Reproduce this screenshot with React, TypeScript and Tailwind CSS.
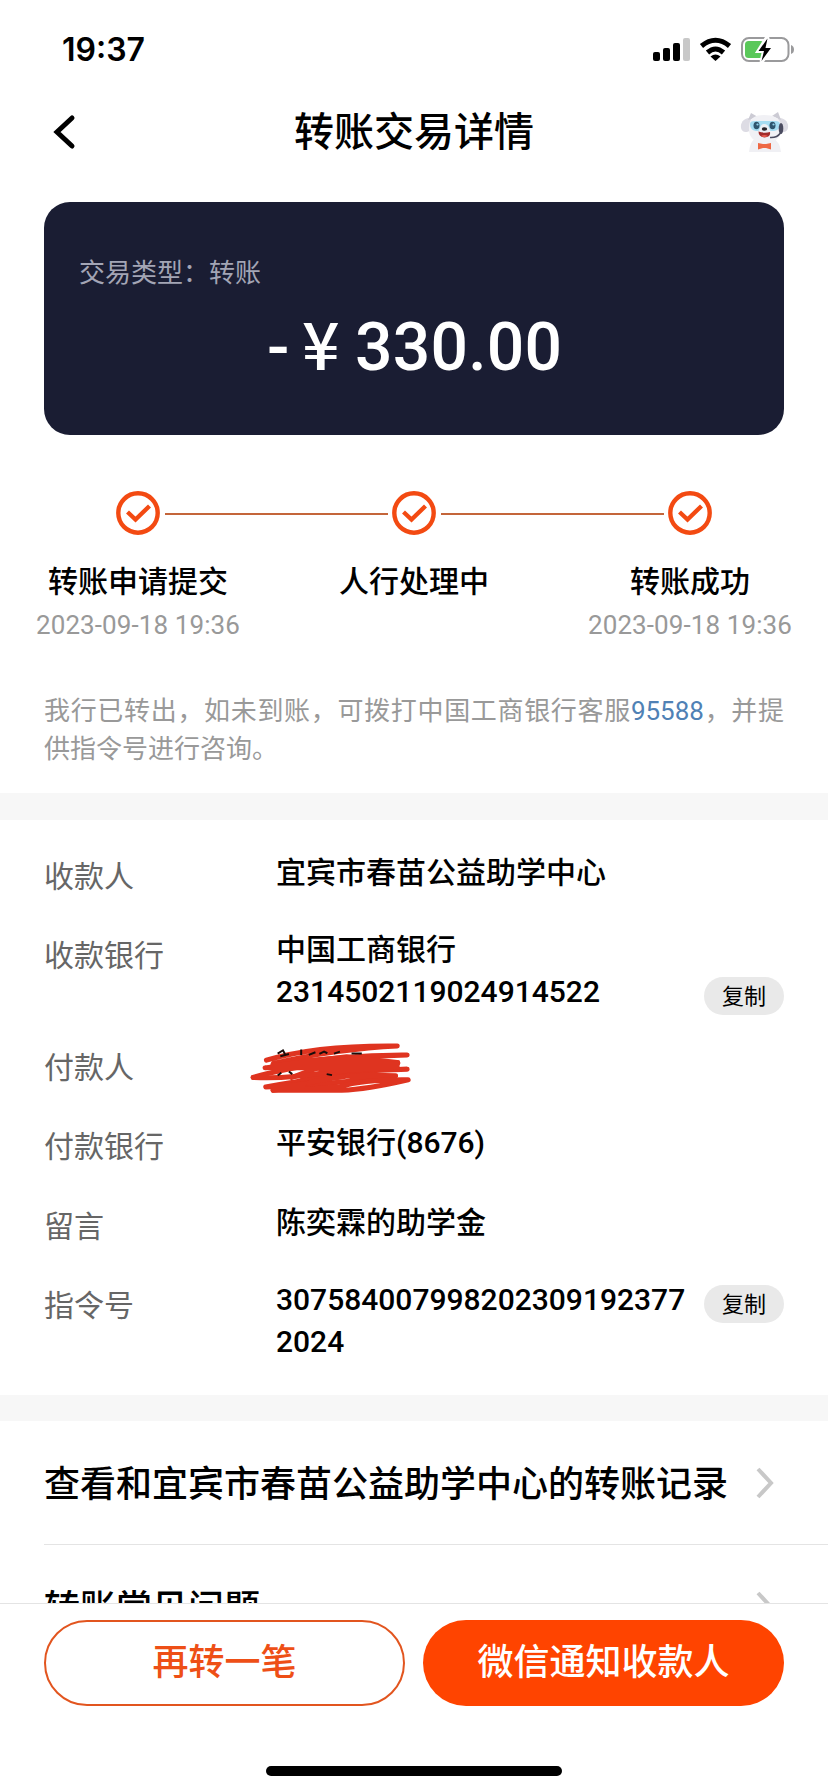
import React from "react";

const FONT = "font-['Roboto','Noto_Sans_CJK_SC',sans-serif]";

function StatusBar() {
  return (
    <div className="flex h-[86px] items-start justify-between pt-[30px] pr-[32px] pl-[62px]">
      <span className="font-['Inter',sans-serif] text-[32px] leading-[40px] font-semibold">19:37</span>
      <svg width="144" height="30" viewBox="652 34 144 30" className="mt-[4px]">
        <rect x="653" y="52" width="7" height="9" rx="2" />
        <rect x="663" y="48" width="7" height="13" rx="2" />
        <rect x="673" y="43" width="7" height="18" rx="2" />
        <rect x="683" y="38" width="7" height="23" rx="2" fill="#c8c8c8" />
        <g fill="none" stroke="#000" strokeWidth="5">
          <path d="M701.5 46 Q715.5 34.500 729.500 46" />
          <path d="M707.5 52.500 Q715.5 45.500 723.5 52.500" />
        </g>
        <path d="M710.500 56.500 Q715.500 52.500 720.500 56.500 L715.500 61 Z" />
        <rect x="742" y="38" width="46.500" height="23" rx="7" fill="none" stroke="#9a9a9c" strokeWidth="2" />
        <rect x="745" y="41" width="19" height="17" rx="3.500" fill="#5ac85a" />
        <path d="M791 45 Q794 46 794 49.500 Q794 53 791 54 Z" fill="#9a9a9c" />
        <path d="M767 37.500 L758.500 51 H764 L761.500 62 L771.500 48 H765.500 L767.500 38.500 Z" stroke="#fff" strokeWidth="4" />
        <path d="M767.500 38.500 L758.500 51 H764 L761.500 61 L771 48 H765.500 Z" />
      </svg>
    </div>
  );
}

function Mascot() {
  return (
    <svg width="50" height="42" viewBox="0 0 50 42" className="translate-y-px">
      <path d="M9 40 Q10 29 16 26 H33 Q40 30 41 40 Z" fill="#f0f0f4" />
      <path d="M11 6 C4 5 0 11 1 16 C2 21 7 21 11 18 Z" fill="#dddce4" />
      <path d="M38 6 C45 5 49 11 48 16 C47 21 42 21 38 18 Z" fill="#dddce4" />
      <path d="M8 8 L11 1 L18 5 Z M32 4 L38 0 L41 8 Z" fill="#cccbd4" />
      <path d="M9 15 C9 6 15 3 24 3 C34 3 41 6 41 15 C42 25 36 31 25 31 C14 31 8 25 9 15 Z" fill="#f1f1f5" />
      <path d="M10 12 Q10 9 15 9 H35 Q40 9 40 12 Q40 18 34 19 H16 Q10 18 10 12 Z" fill="#a5dcf2" />
      <path d="M20 16 Q21 12 24 12 Q28 12 29 16 L31 20 H18 Z" fill="#eceff5" />
      <ellipse cx="16.500" cy="13.500" rx="3" ry="3.800" fill="#2f556e" />
      <ellipse cx="32.500" cy="13.500" rx="3" ry="3.800" fill="#2f556e" />
      <circle cx="17.500" cy="12.500" r="1.100" fill="#8fd1ec" />
      <circle cx="33.500" cy="12.500" r="1.100" fill="#8fd1ec" />
      <ellipse cx="24.500" cy="17" rx="2.700" ry="1.700" fill="#26242c" />
      <path d="M18.500 19.500 Q24 21.500 30 20 Q31 25.500 24.500 25.500 Q18.500 25 18.500 19.500 Z" fill="#a22c2b" />
      <path d="M21 24 Q24 22 28 24 Q25 26 21 24 Z" fill="#ea5c50" />
      <ellipse cx="41" cy="16.500" rx="2.300" ry="5.500" fill="#4b4c60" />
      <path d="M40.500 21 Q37 26 30 25.500" fill="none" stroke="#4b4c60" strokeWidth="1.500" />
      <path d="M18 31 L23 32 H26 L31 31 V37.500 L26 36 H23 L18 37.500 Z" fill="#ee6844" />
    </svg>
  );
}

function Header() {
  return (
    <header className="flex h-[92px] items-center justify-between pr-[38px] pl-[52px]">
      <svg width="36" height="40" viewBox="0 0 36 40" className="shrink-0">
        <path d="M20 6 L5 20 L20 34" fill="none" stroke="#000" strokeWidth="5" strokeLinecap="round" />
      </svg>
      <h1 className="pt-[2px] text-[40px] leading-[48px] font-medium">转账交易详情</h1>
      <Mascot />
    </header>
  );
}

function AmountCard() {
  return (
    <section className="mx-11 mt-[24px] h-[233px] rounded-[26px] bg-[#1a1d33] pt-[52px]">
      <p className="pl-[35px] text-[26px] leading-[38px] text-[#a3a5b5]">交易类型：转账</p>
      <div className="mt-[7px] flex items-baseline pl-[223px] text-[66px] leading-[84px] font-medium text-white">
        <span className="w-[35px]">-</span>
        <span className="w-[53px] font-['Noto_Sans_CJK_SC',sans-serif] text-[66px]">¥</span>
        <span className="tracking-[0.2px]">330.00</span>
      </div>
    </section>
  );
}

function CheckCircle() {
  return (
    <svg width="44" height="44" viewBox="0 0 44 44" fill="none" stroke="#f34a12" className="shrink-0">
      <circle cx="22" cy="22" r="19.700" strokeWidth="4.400" />
      <path d="M11.500 21 L19.500 28.500 L33.500 15" strokeWidth="4.300" />
    </svg>
  );
}

const steps = [
  { title: "转账申请提交", time: "2023-09-18 19:36" },
  { title: "人行处理中", time: "" },
  { title: "转账成功", time: "2023-09-18 19:36" },
];

function Steps() {
  return (
    <section className="mt-[56px]">
      <div className="flex items-center justify-center">
        <CheckCircle />
        <i className="mr-[4px] ml-[5px] h-[2px] w-[223px] translate-y-px bg-[#c4653a]" />
        <CheckCircle />
        <i className="mr-[4px] ml-[5px] h-[2px] w-[223px] translate-y-px bg-[#c4653a]" />
        <CheckCircle />
      </div>
      <div className="flex">
        {steps.map((s) => (
          <div key={s.title} className="w-[276px] text-center">
            <p className="mt-[26px] text-[30px] leading-[42px] font-medium">{s.title}</p>
            <p className="mt-[4px] h-[36px] text-[26px] leading-[36px] tracking-[0.1px] text-[#999]">{s.time}</p>
          </div>
        ))}
      </div>
    </section>
  );
}

function CopyButton() {
  return (
    <button className="flex h-[38px] w-[80px] items-center justify-center rounded-full bg-[#e9e9e9] pt-px text-[22px] leading-none">
      复制
    </button>
  );
}

function Scribble() {
  return (
    <svg width="162" height="53" viewBox="60 95 486 160" className="-ml-[26px]">
      <g fill="none" stroke="#df3420" strokeWidth="15" strokeLinecap="round" strokeLinejoin="round">
        <path d="M108 150 C200 122 330 105 503 107 C400 112 250 130 130 160" />
        <path d="M130 160 C250 150 400 132 533 134 C400 136 250 150 104 173 L505 158" />
        <path d="M68 202 C130 182 250 162 380 140 C300 160 240 180 184 202" />
        <path d="M68 202 C160 206 220 198 330 180 L533 177 C420 180 300 190 215 200" />
        <path d="M498 197 C380 190 260 200 106 231 C240 228 340 216 498 197" />
        <path d="M128 241 H335 C410 238 480 222 536 209 C460 208 380 214 330 230 L200 240" />
        <path d="M128 241 C200 226 260 210 340 200" />
      </g>
      <path d="M120 160 L350 132 L510 150 V178 L330 190 L250 180 L120 180 Z M110 226 L235 212 L220 240 H130 Z" fill="#df3420" />
      <path
        d="M142 130 L158 120 L164 131 M150 138 L176 131 M213 118 V134 M236 134 L256 126 M268 131 L282 124 L292 129 M312 130 L330 124 M365 130 H396 M142 196 L153 188 M176 184 L186 192 M290 192 L306 195"
        fill="none"
        stroke="#1a0d0b"
        strokeWidth="6"
      />
    </svg>
  );
}

const ROW = "flex items-start text-[30px]";
const LABEL = "w-[232px] shrink-0 leading-[42px] text-[#666]";
const VALUE = "leading-[42px] font-medium";

function Details() {
  return (
    <section className="flex h-[575px] flex-col pr-11 pl-11">
      <div className={ROW + " h-[79px] pt-[32px]"}>
        <div className={LABEL + " pt-[4px]"}>收款人</div>
        <div className={VALUE}>宜宾市春苗公益助学中心</div>
      </div>
      <div className={ROW + " h-[112px] pt-[30px]"}>
        <div className={LABEL + " pt-[6px]"}>收款银行</div>
        <div className={VALUE + " flex-1"}>
          中国工商银行
          <br />
          2314502119024914522
        </div>
        <div className="pt-[48px]">
          <CopyButton />
        </div>
      </div>
      <div className={ROW + " h-[80px] pt-[31px]"}>
        <div className={LABEL + " pt-[5px]"}>付款人</div>
        <Scribble />
      </div>
      <div className={ROW + " h-[80px] pt-[31px]"}>
        <div className={LABEL + " pt-[4px]"}>付款银行</div>
        <div className={VALUE}>平安银行(8676)</div>
      </div>
      <div className={ROW + " h-[79px] pt-[31px]"}>
        <div className={LABEL + " pt-[4px]"}>留言</div>
        <div className={VALUE}>陈奕霖的助学金</div>
      </div>
      <div className={ROW + " pt-[29px]"}>
        <div className={LABEL + " pt-[6px]"}>指令号</div>
        <div className={VALUE + " flex-1"}>
          307584007998202309192377
          <br />
          2024
        </div>
        <div className="pt-[6px]">
          <CopyButton />
        </div>
      </div>
    </section>
  );
}

function LinkRow({ text }: { text: string }) {
  return (
    <div className="ml-11 flex h-[124px] shrink-0 items-center justify-between border-b border-[#e4e4e4] pr-[52px]">
      <span className="pt-[5px] text-[36px] leading-[50px] font-medium">{text}</span>
      <svg width="22" height="36" viewBox="0 0 22 36">
        <path d="M4 4 L17 18 L4 32" fill="none" stroke="#c8c8c8" strokeWidth="4" />
      </svg>
    </div>
  );
}

function Footer() {
  return (
    <footer className="flex h-[189px] flex-col items-center border-t border-[#e4e4e4] bg-white">
      <div className="mt-[16px] flex gap-[18px] text-[36px] font-medium">
        <button className="h-[86px] w-[361px] rounded-full border-2 border-[#e2551f] pb-[1px] text-[#ee4f16]">
          再转一笔
        </button>
        <button className="h-[86px] w-[361px] rounded-full bg-[#ff4400] pb-[1px] text-white">微信通知收款人</button>
      </div>
      <div className="mt-[60px] h-[10px] w-[296px] rounded-full bg-black" />
    </footer>
  );
}

export default function App() {
  return (
    <div lang="zh-CN" className={FONT + " flex h-[1792px] w-[828px] flex-col overflow-hidden bg-white text-black"}>
      <StatusBar />
      <Header />
      <AmountCard />
      <Steps />
      <p className="mx-11 mt-[49px] h-[101px] text-justify text-[26px] leading-[38px] text-[#999]">
        我行已转出，如未到账，可拨打中国工商银行客服<span className="text-[#4f81b5]">95588</span>，并提供指令号进行咨询。
      </p>
      <div className="h-[27px] shrink-0 bg-[#f7f7f7]" />
      <Details />
      <div className="h-[26px] shrink-0 bg-[#f7f7f7]" />
      <div className="flex min-h-0 flex-1 flex-col overflow-hidden">
        <LinkRow text="查看和宜宾市春苗公益助学中心的转账记录" />
        <LinkRow text="转账常见问题" />
      </div>
      <Footer />
    </div>
  );
}
